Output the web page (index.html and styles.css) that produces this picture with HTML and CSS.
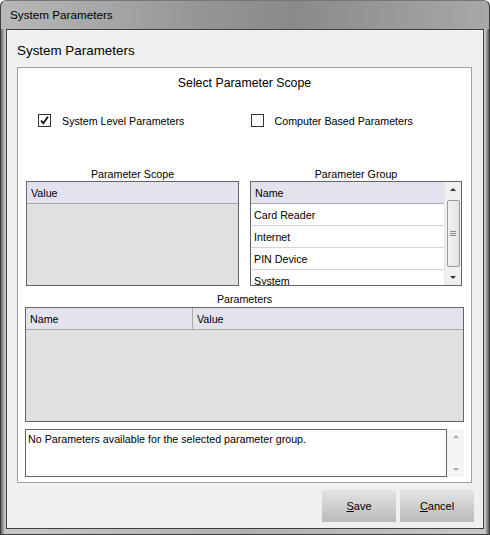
FILE: index.html
```html
<!DOCTYPE html>
<html lang="en">
<head>
  <meta charset="UTF-8">
  <title>System Parameters</title>
  <link rel="stylesheet" href="styles.css">
</head>
<body>
  <div class="window">
    <div class="titlebar">System Parameters</div>

    <div class="client">
      <h1>System Parameters</h1>

      <div class="panel">
        <div class="scope-title">Select Parameter Scope</div>

        <!-- Scope checkboxes -->
        <div class="scope-row">
          <label class="check">
            <span class="box">
              <svg width="11" height="11" viewBox="0 0 11 11"><path d="M2 5.5 L4.3 8.2 L9 1.8" fill="none" stroke="#111" stroke-width="1.8"/></svg>
            </span>
            System Level Parameters
          </label>
          <label class="check">
            <span class="box"></span>
            Computer Based Parameters
          </label>
        </div>

        <!-- Scope / group lists -->
        <div class="lists">
          <div class="list-col">
            <div class="caption">Parameter Scope</div>
            <div class="grid">
              <div class="grid-head"><span class="cell">Value</span></div>
              <div class="grid-body"></div>
            </div>
          </div>
          <div class="list-col">
            <div class="caption">Parameter Group</div>
            <div class="grid group-grid">
              <div class="group-rows">
                <div class="grid-head"><span class="cell">Name</span></div>
                <div class="row">Card Reader</div>
                <div class="row">Internet</div>
                <div class="row">PIN Device</div>
                <div class="row">System</div>
              </div>
              <div class="vscroll">
                <span class="arrow up"></span>
                <span class="thumb"><span class="grip"></span></span>
                <span class="arrow down"></span>
              </div>
            </div>
          </div>
        </div>

        <!-- Parameters table -->
        <div class="caption params-caption">Parameters</div>
        <div class="grid params-grid">
          <div class="grid-head">
            <span class="cell name-col">Name</span>
            <span class="cell">Value</span>
          </div>
          <div class="grid-body"></div>
        </div>

        <div class="message">
          <div class="message-text">No Parameters available for the selected parameter group.</div>
          <div class="vscroll light">
            <span class="arrow up"></span>
            <span class="track"></span>
            <span class="arrow down"></span>
          </div>
        </div>
      </div>

      <div class="buttons">
        <button><u>S</u>ave</button>
        <button><u>C</u>ancel</button>
      </div>
    </div>
  </div>
</body>
</html>
```

FILE: styles.css
```css
body {
  margin: 0;
  font-family: "Liberation Sans", Arial, sans-serif;
  font-size: 10.7px;
  color: #000;
}

.window {
  width: 490px;
  height: 535px;
  box-sizing: border-box;
  padding: 0 5px 5px 5px;
  display: flex;
  flex-direction: column;
  background: linear-gradient(to right, #6a6a6a 0, #c8c8c8 4px, #b0b0b0 50%, #c8c8c8 calc(100% - 4px), #5a5a5a 100%);
  border-radius: 6px 6px 0 0;
  border: 1px solid #3c3c3c;
  border-top-color: #777;
}

.titlebar {
  height: 28px;
  line-height: 27px;
  font-size: 11.7px;
  background: linear-gradient(to right, #b8b8b8, #969696 40%, #8a8a8a 60%, #a8a8a8);
  margin: 0 -5px;
  padding-left: 9px;
  border-radius: 6px 6px 0 0;
}

.client {
  flex: 1;
  background: #f0f0f0;
  border: 1px solid #404040;
  display: flex;
  flex-direction: column;
}

h1 {
  margin: 0;
  padding: 12px 0 0 10px;
  height: 25px;
  font-size: 13.4px;
  font-weight: normal;
  line-height: 17px;
}

.panel {
  margin: 0 11px 0 10px;
  background: #fff;
  border: 1px solid #a0a0a0;
  padding: 8px 8px 5px 8px;
}

.scope-title {
  text-align: center;
  font-size: 12.3px;
  line-height: 15px;
}

.scope-row {
  display: flex;
  margin-top: 23px;
  padding-left: 12px;
  height: 13px;
}

.check {
  display: flex;
  align-items: center;
  gap: 11px;
  width: 213px;
}

.box {
  width: 11px;
  height: 11px;
  border: 1px solid #333;
  background: #fff;
  display: flex;
  align-items: center;
  justify-content: center;
}

.lists {
  display: grid;
  grid-template-columns: 213px 212px;
  gap: 11px;
  margin-top: 40px;
}

.caption {
  text-align: center;
  line-height: 14px;
  height: 14px;
}

.grid {
  border: 1px solid #646464;
  background: #e0e0e0;
  height: 103px;
  display: flex;
  flex-direction: column;
}

.grid-head {
  height: 21px;
  background: #e3e3f0;
  border-bottom: 1px solid #a8a8a8;
  display: flex;
  flex-shrink: 0;
}

.cell {
  line-height: 22px;
  padding-left: 4px;
}

.group-grid {
  flex-direction: row;
  background: #fff;
  overflow: hidden;
}

.group-rows {
  flex: 1;
}

.row {
  height: 21px;
  line-height: 22px;
  padding-left: 3px;
  border-bottom: 1px solid #d4d4d4;
}

.vscroll {
  width: 16px;
  border-left: 1px solid #e8e8e8;
  background: #f0f0f0;
  display: flex;
  flex-direction: column;
  align-items: center;
}

.arrow {
  height: 16px;
  width: 16px;
  flex-shrink: 0;
  position: relative;
}

.arrow::after {
  content: "";
  position: absolute;
  left: 5px;
  border-left: 3px solid transparent;
  border-right: 3px solid transparent;
}

.arrow.up::after {
  top: 6px;
  border-bottom: 3px solid #333;
}

.arrow.down::after {
  top: 7px;
  border-top: 3px solid #333;
}

.thumb {
  flex: 1;
  width: 13px;
  margin: 2px 0;
  border: 1px solid #9a9a9a;
  border-radius: 2px;
  background: linear-gradient(to right, #f2f2f2, #e2e2e2);
  display: flex;
  align-items: center;
  justify-content: center;
  box-sizing: border-box;
}

.grip {
  width: 6px;
  height: 5px;
  border-top: 1px solid #888;
  border-bottom: 1px solid #888;
  box-sizing: border-box;
  position: relative;
}

.grip::after {
  content: "";
  position: absolute;
  left: 0;
  right: 0;
  top: 1px;
  border-top: 1px solid #888;
}

.params-caption {
  margin-top: 6px;
  margin-bottom: 1px;
}

.params-grid {
  height: 113px;
  margin: 0 -1px;
}

.name-col {
  width: 162px;
  border-right: 1px solid #a8a8a8;
}

.message {
  margin: 7px -1px 0 -1px;
  height: 48px;
  display: flex;
}

.message-text {
  flex: 1;
  border: 1px solid #646464;
  padding: 2px 2px;
  line-height: 14px;
}

.vscroll.light {
  border-left: none;
  width: 17px;
  background: #f4f4f4;
}

.vscroll.light .arrow.up::after {
  border-bottom-color: #a8a8a8;
}

.vscroll.light .arrow.down::after {
  border-top-color: #a8a8a8;
}

.track {
  flex: 1;
}

.buttons {
  display: flex;
  justify-content: flex-end;
  gap: 4px;
  margin: 7px 9px 0 0;
}

button {
  width: 74px;
  height: 32px;
  border: none;
  background: linear-gradient(to bottom, #e4e4e4, #bababa);
  font-family: "Liberation Sans", Arial, sans-serif;
  font-size: 11px;
  color: #000;
  padding: 0;
}
```
